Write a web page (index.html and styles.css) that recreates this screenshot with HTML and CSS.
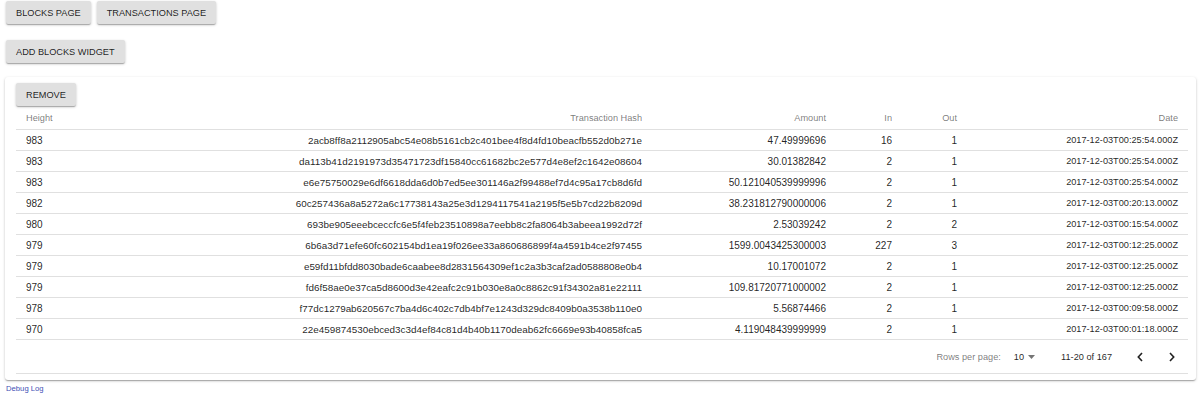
FILE: index.html
```html
<!DOCTYPE html>
<html>
<head>
<meta charset="utf-8">
<link rel="stylesheet" href="styles.css">
</head>
<body>
<div class="nav">
  <button class="btn">Blocks Page</button>
  <button class="btn">Transactions Page</button>
</div>
<div class="nav second">
  <button class="btn">Add Blocks Widget</button>
</div>
<div class="card">
  <button class="btn">Remove</button>
  <div class="table">
    <div class="row head">
      <div class="c left">Height</div>
      <div class="c">Transaction Hash</div>
      <div class="c">Amount</div>
      <div class="c">In</div>
      <div class="c">Out</div>
      <div class="c">Date</div>
    </div>
    <div class="row"><div class="c left">983</div><div class="c hash">2acb8ff8a2112905abc54e08b5161cb2c401bee4f8d4fd10beacfb552d0b271e</div><div class="c">47.49999696</div><div class="c">16</div><div class="c">1</div><div class="c date">2017-12-03T00:25:54.000Z</div></div>
    <div class="row"><div class="c left">983</div><div class="c hash">da113b41d2191973d35471723df15840cc61682bc2e577d4e8ef2c1642e08604</div><div class="c">30.01382842</div><div class="c">2</div><div class="c">1</div><div class="c date">2017-12-03T00:25:54.000Z</div></div>
    <div class="row"><div class="c left">983</div><div class="c hash">e6e75750029e6df6618dda6d0b7ed5ee301146a2f99488ef7d4c95a17cb8d6fd</div><div class="c">50.121040539999996</div><div class="c">2</div><div class="c">1</div><div class="c date">2017-12-03T00:25:54.000Z</div></div>
    <div class="row"><div class="c left">982</div><div class="c hash">60c257436a8a5272a6c17738143a25e3d1294117541a2195f5e5b7cd22b8209d</div><div class="c">38.231812790000006</div><div class="c">2</div><div class="c">1</div><div class="c date">2017-12-03T00:20:13.000Z</div></div>
    <div class="row"><div class="c left">980</div><div class="c hash">693be905eeebceccfc6e5f4feb23510898a7eebb8c2fa8064b3abeea1992d72f</div><div class="c">2.53039242</div><div class="c">2</div><div class="c">2</div><div class="c date">2017-12-03T00:15:54.000Z</div></div>
    <div class="row"><div class="c left">979</div><div class="c hash">6b6a3d71efe60fc602154bd1ea19f026ee33a860686899f4a4591b4ce2f97455</div><div class="c">1599.0043425300003</div><div class="c">227</div><div class="c">3</div><div class="c date">2017-12-03T00:12:25.000Z</div></div>
    <div class="row"><div class="c left">979</div><div class="c hash">e59fd11bfdd8030bade6caabee8d2831564309ef1c2a3b3caf2ad0588808e0b4</div><div class="c">10.17001072</div><div class="c">2</div><div class="c">1</div><div class="c date">2017-12-03T00:12:25.000Z</div></div>
    <div class="row"><div class="c left">979</div><div class="c hash">fd6f58ae0e37ca5d8600d3e42eafc2c91b030e8a0c8862c91f34302a81e22111</div><div class="c">109.81720771000002</div><div class="c">2</div><div class="c">1</div><div class="c date">2017-12-03T00:12:25.000Z</div></div>
    <div class="row"><div class="c left">978</div><div class="c hash">f77dc1279ab620567c7ba4d6c402c7db4bf7e1243d329dc8409b0a3538b110e0</div><div class="c">5.56874466</div><div class="c">2</div><div class="c">1</div><div class="c date">2017-12-03T00:09:58.000Z</div></div>
    <div class="row"><div class="c left">970</div><div class="c hash">22e459874530ebced3c3d4ef84c81d4b40b1170deab62fc6669e93b40858fca5</div><div class="c">4.119048439999999</div><div class="c">2</div><div class="c">1</div><div class="c date">2017-12-03T00:01:18.000Z</div></div>
    <div class="footer">
      <span class="label">Rows per page:</span>
      <span class="select">10 <svg width="7" height="4" viewBox="0 0 7 4"><path d="M0 0 L7 0 L3.5 4 Z" fill="#757575"/></svg></span>
      <span class="range">11-20 of 167</span>
      <span class="pager">
        <span class="ib"><svg width="6" height="10" viewBox="0 0 6 10"><path d="M5 1 L1.3 5 L5 9" fill="none" stroke="#222" stroke-width="1.6"/></svg></span>
        <span class="ib"><svg width="6" height="10" viewBox="0 0 6 10"><path d="M1 1 L4.7 5 L1 9" fill="none" stroke="#222" stroke-width="1.6"/></svg></span>
      </span>
    </div>
  </div>
</div>
<a class="debug" href="#">Debug Log</a>
</body>
</html>
```
FILE: styles.css
```css
html, body {
  margin: 0;
  padding: 0;
  background: #fff;
  font-family: "Liberation Sans", Arial, sans-serif;
}
.nav {
  display: flex;
  gap: 6px;
  padding: 1px 6px 0;
}
.nav.second {
  margin-top: 15px;
}
.btn {
  height: 23px;
  padding: 0 10px;
  border: none;
  border-radius: 2px;
  background: #e0e0e0;
  color: rgba(0, 0, 0, 0.87);
  font-family: "Liberation Sans", Arial, sans-serif;
  font-size: 9.2px;
  text-transform: uppercase;
  box-shadow: 0 1px 3px rgba(0,0,0,0.2), 0 1px 1px rgba(0,0,0,0.14), 0 2px 1px -1px rgba(0,0,0,0.12);
}
.card {
  margin: 14px 4px 0 5px;
  padding: 6px 8px 6px 11px;
  background: #fff;
  border-radius: 3px;
  box-shadow: 0 1px 3px rgba(0,0,0,0.2), 0 1px 1px rgba(0,0,0,0.14), 0 2px 1px -1px rgba(0,0,0,0.12);
}
.row {
  display: grid;
  grid-template-columns: 150px 486px 184px 66px 65px 1fr;
  box-sizing: border-box;
  height: 21px;
  border-bottom: 1px solid #e0e0e0;
  align-items: center;
  font-size: 10px;
  color: rgba(0, 0, 0, 0.87);
}
.row.head {
  height: 24px;
  font-size: 9.2px;
  color: rgba(0, 0, 0, 0.54);
}
.c {
  padding: 0 10px;
  text-align: right;
  white-space: nowrap;
}
.c.left {
  text-align: left;
}
.c.hash {
  font-size: 9.9px;
}
.c.date {
  font-size: 9.2px;
}
.footer {
  display: flex;
  align-items: center;
  justify-content: flex-end;
  box-sizing: border-box;
  height: 34px;
  border-bottom: 1px solid #e0e0e0;
  font-size: 9.2px;
  color: rgba(0, 0, 0, 0.54);
}
.label {
  margin-right: 13px;
}
.select {
  display: flex;
  align-items: center;
  gap: 4px;
  color: rgba(0, 0, 0, 0.87);
}
.range {
  margin-left: 26px;
  margin-right: 12px;
  color: rgba(0, 0, 0, 0.87);
}
.pager {
  display: flex;
}
.ib {
  display: flex;
  align-items: center;
  justify-content: center;
  width: 32px;
  height: 24px;
}
.debug {
  display: block;
  margin: 4px 0 0 6px;
  font-size: 7.7px;
  color: #3f51b5;
  text-decoration: none;
}
```
